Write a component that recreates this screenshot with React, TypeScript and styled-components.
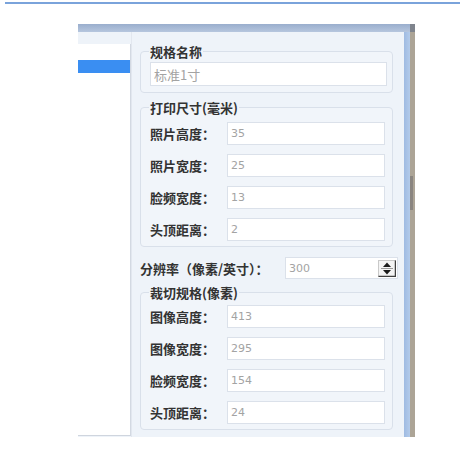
import React from "react";
import styled, { createGlobalStyle } from "styled-components";

const GlobalStyle = createGlobalStyle`
  body {
    margin: 0;
    background: #ffffff;
    font-family: "Noto Sans CJK SC", "Noto Sans", sans-serif;
  }
`;

const Page = styled.div`
  padding-top: 2px;
`;

const TopRule = styled.div`
  margin: 0 5px;
  height: 2px;
  background: #7aa3db;
`;

const Window = styled.div`
  margin: 20px 0 0 78px;
  width: 337px;
  height: 413px;
  display: flex;
  flex-direction: column;
  background: #eef3f9;
`;

const TitleBar = styled.div`
  height: 8px;
  display: flex;
`;

const TitleFill = styled.div`
  flex: 1;
  background: linear-gradient(#9aaecd, #b6c6de);
`;

const TitleCorner = styled.div`
  width: 5px;
  background: #7f848d;
`;

const Body = styled.div`
  flex: 1;
  display: flex;
  min-height: 0;
`;

const Sidebar = styled.div`
  width: 55px;
  padding-top: 12px;
  display: flex;
  flex-direction: column;
`;

const List = styled.div`
  flex: 1;
  background: #ffffff;
  border-right: 1px solid #d3d9e2;
  border-bottom: 1px solid #cfd5de;
  margin-bottom: 1px;
`;

const SelectedItem = styled.div`
  margin-top: 16px;
  height: 13px;
  background: #3a8ef2;
`;

const Form = styled.div`
  flex: 1;
  background: #eef3f9;
  border-left: 1px solid #e2e7ef;
  padding-top: 13px;
  display: flex;
  flex-direction: column;
`;

const Group = styled.fieldset<{ $gap?: number }>`
  margin: ${(p) => p.$gap ?? 0}px 11px 0 8px;
  padding: 0 5px 5px 9px;
  border: 1px solid #d9e0ea;
  border-radius: 4px;
  background: #f1f5fa;
  display: flex;
  flex-direction: column;
  gap: 9px;
`;

const Legend = styled.legend`
  padding: 0 1px;
  margin-left: -1px;
  font-size: 13px;
  line-height: 13px;
  height: 13px;
  font-weight: 700;
  color: #333333;
`;

const Row = styled.div<{ $top: number }>`
  display: grid;
  grid-template-columns: 77px 158px;
  align-items: center;
  margin-top: ${(p) => p.$top}px;
`;

const Label = styled.span`
  font-size: 13px;
  font-weight: 700;
  color: #333333;
  white-space: nowrap;
`;

const Field = styled.input<{ $cjk?: boolean }>`
  box-sizing: border-box;
  width: 100%;
  height: ${(p) => (p.$cjk ? 24 : 23)}px;
  margin: 0;
  padding: 0 0 0 3px;
  border: 1px solid #dbe1ea;
  background: #ffffff;
  color: #a3a3a3;
  font-family: ${(p) =>
    p.$cjk ? `"Noto Sans CJK SC", sans-serif` : `"DejaVu Sans", sans-serif`};
  font-size: ${(p) => (p.$cjk ? 13 : 11)}px;
  outline: none;
`;

const NameField = styled(Field)`
  margin-top: 4px;
  margin-bottom: 1px;
  width: 237px;
`;

const ResolutionRow = styled.div`
  margin: 10px 6px 0 8px;
  display: flex;
  align-items: center;
  justify-content: space-between;
  height: 22px;
`;

const SpinBox = styled.div`
  box-sizing: border-box;
  width: 113px;
  height: 22px;
  border: 1px solid #dbe1ea;
  background: #ffffff;
  display: flex;
  align-items: center;
  padding: 0 1px 0 3px;
`;

const SpinValue = styled.span`
  flex: 1;
  color: #a3a3a3;
  font-family: "DejaVu Sans", sans-serif;
  font-size: 11px;
`;

const SpinButton = styled.div`
  width: 18px;
  height: 17px;
  display: flex;
`;

const Edge = styled.div`
  width: 11px;
  display: flex;
`;

const EdgeBlue = styled.div`
  width: 6px;
  background: linear-gradient(90deg, #9fbbe2, #b3cbea);
`;

const EdgeTrack = styled.div`
  width: 5px;
  background: #aca496;
  display: flex;
  flex-direction: column;
`;

const EdgeThumb = styled.div`
  margin-top: 144px;
  height: 34px;
  width: 3px;
  background: #8a8580;
`;

const printRows = [
  { label: "照片高度：", value: "35" },
  { label: "照片宽度：", value: "25" },
  { label: "脸频宽度：", value: "13" },
  { label: "头顶距离：", value: "2" },
];

const cropRows = [
  { label: "图像高度：", value: "413" },
  { label: "图像宽度：", value: "295" },
  { label: "脸频宽度：", value: "154" },
  { label: "头顶距离：", value: "24" },
];

function Spinner() {
  return (
    <SpinButton>
      <svg width="18" height="17" viewBox="0 0 18 17">
        <rect x="0.5" y="0.5" width="17" height="16" fill="#f4f4f4" stroke="#c9c9c9" />
        <path d="M17.5 0.5 V16.5 H0.5" fill="none" stroke="#404040" strokeWidth="1.5" />
        <line x1="3" y1="8.5" x2="15" y2="8.5" stroke="#9a9a9a" />
        <path d="M9 2.5 L13 7 H5 Z" fill="#1a1a1a" />
        <path d="M9 14.5 L13 10 H5 Z" fill="#1a1a1a" />
      </svg>
    </SpinButton>
  );
}

export default function App() {
  return (
    <Page>
      <GlobalStyle />
      <TopRule />
      <Window>
        <TitleBar>
          <TitleFill />
          <TitleCorner />
        </TitleBar>
        <Body>
          <Sidebar>
            <List>
              <SelectedItem />
            </List>
          </Sidebar>
          <Form>
            <Group>
              <Legend>规格名称</Legend>
              <NameField $cjk readOnly value="标准1寸" />
            </Group>
            <Group $gap={8}>
              <Legend>打印尺寸(毫米)</Legend>
              {printRows.map((r, i) => (
                <Row key={r.label} $top={i === 0 ? 8 : 0}>
                  <Label>{r.label}</Label>
                  <Field readOnly value={r.value} />
                </Row>
              ))}
            </Group>
            <ResolutionRow>
              <Label>分辨率（像素/英寸）：</Label>
              <SpinBox>
                <SpinValue>300</SpinValue>
                <Spinner />
              </SpinBox>
            </ResolutionRow>
            <Group $gap={7}>
              <Legend>裁切规格(像素)</Legend>
              {cropRows.map((r, i) => (
                <Row key={r.label} $top={i === 0 ? 6 : 0}>
                  <Label>{r.label}</Label>
                  <Field readOnly value={r.value} />
                </Row>
              ))}
            </Group>
          </Form>
          <Edge>
            <EdgeBlue />
            <EdgeTrack>
              <EdgeThumb />
            </EdgeTrack>
          </Edge>
        </Body>
      </Window>
    </Page>
  );
}
